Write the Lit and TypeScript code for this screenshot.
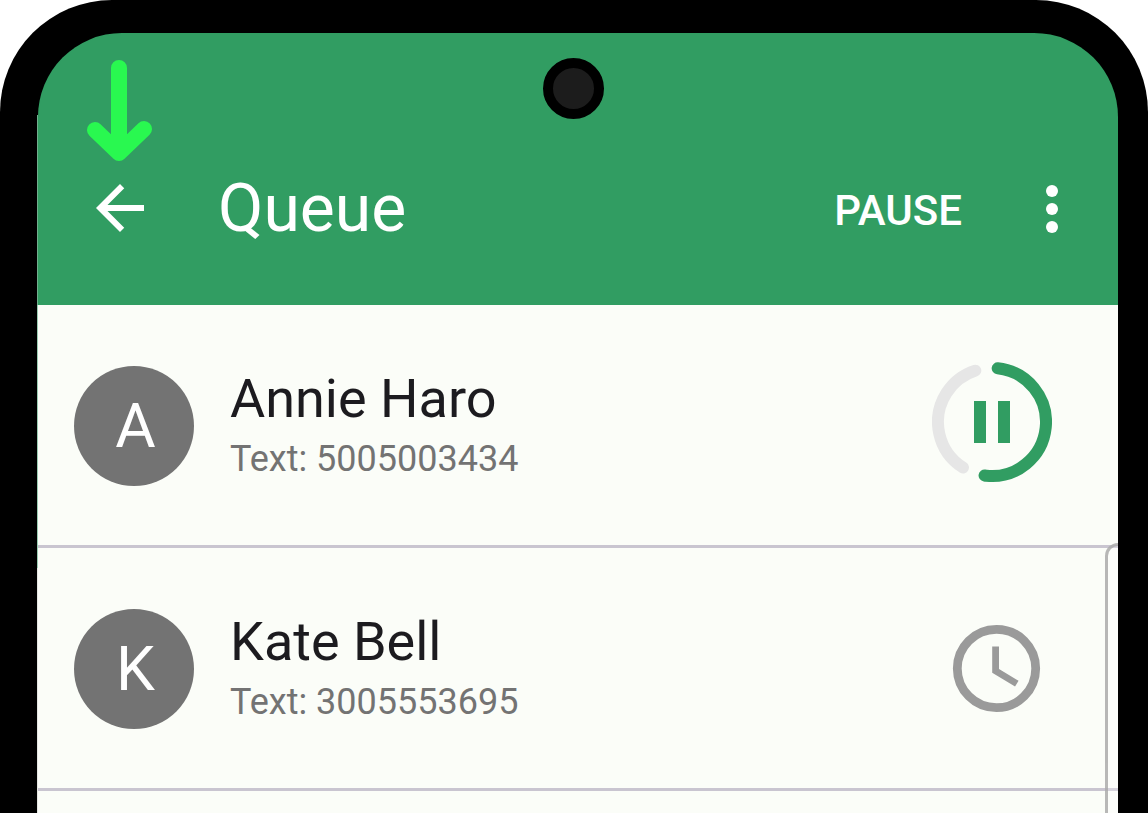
import { LitElement, html, css, svg } from "lit";
import { customElement, property } from "lit/decorators.js";

interface QueueEntry {
  name: string;
  detail: string;
  status: "sending" | "waiting";
}

const entries: QueueEntry[] = [
  { name: "Annie Haro", detail: "Text: 5005003434", status: "sending" },
  { name: "Kate Bell", detail: "Text: 3005553695", status: "waiting" },
];

const progressIcon = svg`
  <g fill="none" stroke-width="12" stroke-linecap="round">
    <circle cx="60" cy="60" r="54" stroke="#e6e6e6" pathLength="360"
      stroke-dasharray="129.5 230.5" transform="rotate(122.5 60 60)" />
    <circle cx="60" cy="60" r="54" stroke="#319d62" pathLength="360"
      stroke-dasharray="182 178" transform="rotate(-84 60 60)" />
  </g>
  <path fill="#319d62" d="M42 39h12v42H42zM66 39h12v42H66z" />
`;

const clockIcon = svg`
  <g fill="none" stroke="#9a9a9a">
    <circle cx="64.5" cy="63.5" r="39.2" stroke-width="8.8" />
    <path stroke-width="6.8" d="M63.6 41.5V65.8L84.8 78.7" />
  </g>
`;

@customElement("queue-row")
export class QueueRow extends LitElement {
  @property({ attribute: false }) entry!: QueueEntry;

  static styles = css`
    :host {
      display: flex;
      align-items: center;
      gap: 36px;
      padding: 57px 66px 55px 36px;
      border-bottom: 3px solid #c9c5d0;
    }
    .avatar {
      flex: none;
      display: grid;
      place-items: center;
      box-sizing: border-box;
      width: 120px;
      height: 120px;
      padding-left: 3px;
      border-radius: 50%;
      background: #737373;
      color: #fff;
      font-size: 62px;
      line-height: 72px;
    }
    .texts {
      flex: 1;
      min-width: 0;
      display: flex;
      flex-direction: column;
      gap: 6px;
      padding-bottom: 4px;
    }
    .name {
      margin: 0;
      font-size: 54px;
      font-weight: 400;
      line-height: 64px;
      color: #1c1b1f;
    }
    .detail {
      margin: 0;
      font-size: 36px;
      line-height: 44px;
      color: #737373;
    }
    .action {
      flex: none;
      padding: 0;
      border: 0;
      background: none;
    }
    .icon {
      display: block;
      width: 120px;
      height: 128px;
    }
  `;

  render() {
    const { name, detail, status } = this.entry;
    const sending = status === "sending";
    return html`
      <div class="avatar" aria-hidden="true">${name[0]}</div>
      <div class="texts">
        <h2 class="name">${name}</h2>
        <p class="detail">${detail}</p>
      </div>
      <button class="action" aria-label=${sending ? "Pause sending" : "Waiting"}>
        <svg class="icon" viewBox="0 0 120 128">
          ${sending ? progressIcon : clockIcon}
        </svg>
      </button>
    `;
  }
}

@customElement("app-root")
export class AppRoot extends LitElement {
  static styles = css`
    :host {
      display: block;
      height: 100vh;
      overflow: hidden;
      background: #fff;
      font-family: Roboto, "Noto Sans", sans-serif;
    }
    .phone {
      position: relative;
      box-sizing: border-box;
      display: flex;
      min-height: 100%;
      padding: 33px 30px 0 38px;
      border-radius: 112px 112px 0 0;
      background: #000;
    }
    .screen {
      position: relative;
      flex: 1;
      min-width: 0;
      display: flex;
      flex-direction: column;
    }
    .list {
      flex: 1;
      background: #fbfdf8;
    }
    .edge {
      position: absolute;
      top: 82px;
      bottom: 0;
      left: -1px;
      width: 1px;
      background: linear-gradient(#6fae8c 190px, #9accb2 190px 453px, #e4e6e2 453px);
    }
    .camera {
      position: absolute;
      top: 58px;
      left: 50%;
      box-sizing: border-box;
      width: 61px;
      height: 61px;
      margin-left: -31px;
      border: 10px solid #000;
      border-radius: 50%;
      background: #1c1c1c;
    }
    .pointer {
      position: absolute;
      top: 58px;
      left: 84px;
      width: 72px;
      height: 106px;
    }
    .bar {
      display: flex;
      align-items: center;
      padding: 138px 30px 60px 46px;
      border-radius: 84px 84px 0 0;
      background: #319d62;
      color: #fff;
    }
    .tool {
      padding: 0;
      border: 0;
      background: none;
      color: inherit;
      font: inherit;
    }
    .glyph {
      display: block;
      width: 72px;
      height: 72px;
      fill: currentColor;
    }
    .title {
      flex: 1;
      margin: 0 0 0 62px;
      padding-top: 2px;
      font-size: 66px;
      font-weight: 400;
      line-height: 72px;
    }
    .pause {
      margin-right: 54px;
      padding-top: 6px;
      font-size: 42px;
      font-weight: 500;
      line-height: 48px;
    }
    .scroller {
      position: absolute;
      top: 510px;
      right: 0;
      bottom: 0;
      box-sizing: border-box;
      width: 13px;
      border: 3px solid #a6a6a6cc;
      border-right: 0;
      border-bottom: 0;
      border-radius: 13px 0 0 0;
      background: #ffffff40;
    }
  `;

  render() {
    return html`
      <div class="phone">
        <main class="screen">
          <header class="bar">
            <button class="tool" aria-label="Back">
              <svg class="glyph" viewBox="0 0 24 24">
                <path d="M20 11H7.83l5.59-5.59L12 4l-8 8 8 8 1.41-1.41L7.83 13H20v-2z" />
              </svg>
            </button>
            <h1 class="title">Queue</h1>
            <button class="tool pause">PAUSE</button>
            <button class="tool" aria-label="More options">
              <svg class="glyph" viewBox="0 0 24 24">
                <circle cx="12" cy="6.33" r="2" />
                <circle cx="12" cy="12.33" r="2" />
                <circle cx="12" cy="18.33" r="2" />
              </svg>
            </button>
          </header>
          <section class="list" aria-label="Queued messages">
            ${entries.map((entry) => html`<queue-row .entry=${entry}></queue-row>`)}
          </section>
          <div class="edge"></div>
          <div class="scroller"></div>
        </main>
        <div class="camera"></div>
        <svg class="pointer" viewBox="0 0 72 106" aria-hidden="true">
          <path
            d="M35 10V92M11 72L35 95L60 71"
            fill="none"
            stroke="#29f850"
            stroke-width="16"
            stroke-linecap="round"
            stroke-linejoin="round"
          />
        </svg>
      </div>
    `;
  }
}
